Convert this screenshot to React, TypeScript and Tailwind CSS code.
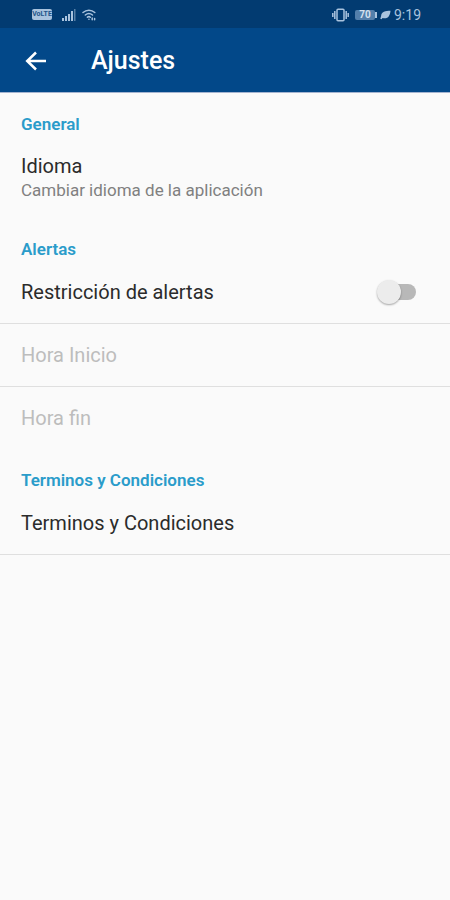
import React, { useState } from "react";
import clsx from "clsx";

const StatusBar = () => {
  return (
    <div className="flex h-7 items-center justify-between bg-[#023b71] pt-px pr-[29px] pl-8 text-[#a9c3de]">
      <div className="flex items-center">
        <span className="flex h-[11px] w-5 items-center justify-center rounded-xs bg-[#a9c3de] text-[7px] font-bold text-[#23558a]">
          VoLTE
        </span>
        <svg className="ml-[10px]" width="14" height="12" viewBox="0 0 14 12" fill="currentColor">
          <rect x="0" y="9" width="2" height="3" />
          <rect x="3" y="7" width="2" height="5" />
          <rect x="6" y="5" width="2" height="7" />
          <rect x="9" y="2" width="2" height="10" />
          <rect x="12" y="0" width="1.5" height="12" opacity="0.5" />
        </svg>
        <svg
          className="ml-[6px]"
          width="14"
          height="12"
          viewBox="0 0 14 12"
          fill="none"
          stroke="currentColor"
          strokeWidth="1.5"
          strokeLinecap="round"
        >
          <path d="M1 3.5C4.4 0.4 9.4 0.4 12.8 3.5" />
          <path d="M3.3 6C5.4 4.2 8.4 4.2 10.5 6" />
          <path d="M5.4 8.2C6.3 7.5 7.5 7.5 8.3 8.2" />
          <path d="M6.9 10.3h.1M10.2 9v1.8M12.6 9.4v1.4" />
        </svg>
      </div>

      <div className="flex items-center">
        <svg
          width="17"
          height="14"
          viewBox="0 0 17 14"
          fill="none"
          stroke="currentColor"
          strokeWidth="1.5"
        >
          <rect x="5" y="1.2" width="7" height="11.6" rx="1" />
          <path d="M2.8 3v8M14.2 3v8M0.8 5v4M16.2 5v4" />
        </svg>
        <span className="ml-[6px] flex h-[10px] w-5 items-center justify-center rounded-xs bg-[#537fab] text-[10px] font-bold text-[#d3e1ee]">
          70
        </span>
        <span className="h-[6px] w-[2px] bg-[#a9c3de]" />
        <svg className="ml-[3px]" width="11" height="10" viewBox="0 0 12 10" fill="currentColor">
          <path d="M11.5 0.3C6 0.3 1.2 1.6 1.2 6.1L0.3 9.2l1.4 0.3L2.8 8.3C8.4 9.8 11 6 11.5 0.3Z" />
        </svg>
        <span className="ml-[3px] text-[14px] leading-6">9:19</span>
      </div>
    </div>
  );
};

const SectionTitle = ({ children }: { children: React.ReactNode }) => {
  return (
    <h2 className="px-[21px] pt-[19px] text-[17px] leading-6 font-semibold text-[#2a9cca]">
      {children}
    </h2>
  );
};

type RowProps = {
  title: string;
  summary?: string;
  disabled?: boolean;
  divider?: boolean;
};

const Row = ({ title, summary, disabled, divider }: RowProps) => {
  return (
    <button
      type="button"
      disabled={disabled}
      className={clsx(
        "block w-full px-[21px] text-left",
        summary ? "pt-[18px] pb-4" : "py-[19px]",
        divider && "border-b border-[#dfdfdf]",
      )}
    >
      <span
        className={clsx(
          "block text-[20px] leading-6",
          disabled ? "text-[#bdbdbd]" : "text-[#2b2b2b]",
        )}
      >
        {title}
      </span>
      {summary && (
        <span className="block text-[17px] leading-6 text-[#808080]">{summary}</span>
      )}
    </button>
  );
};

const App = () => {
  const [restricted, setRestricted] = useState(false);

  return (
    <div className="min-h-screen bg-[#fafafa] font-['Roboto',sans-serif]">
      <StatusBar />
      <header className="flex h-[65px] items-center border-b border-[#a5b4d0] bg-[#024889] pt-[2px] pl-[25px] text-white">
        <button type="button" aria-label="Volver">
          <svg
            width="22"
            height="20"
            viewBox="0 0 22 20"
            fill="none"
            stroke="currentColor"
            strokeWidth="2.5"
          >
            <path d="M21 10H2.5M11 1.5L2.2 10l8.8 8.5" />
          </svg>
        </button>
        <h1 className="ml-11 text-[25px] leading-8 font-medium">Ajustes</h1>
      </header>

      <main>
        <section>
          <SectionTitle>General</SectionTitle>
          <Row title="Idioma" summary="Cambiar idioma de la aplicación" />
        </section>

        <section>
          <SectionTitle>Alertas</SectionTitle>
          <label className="flex items-center justify-between border-b border-[#dfdfdf] py-[19px] pr-[34px] pl-[21px]">
            <span className="text-[20px] leading-6 text-[#2b2b2b]">Restricción de alertas</span>
            <span className="relative flex h-6 w-[39px] items-center justify-end">
              <input
                type="checkbox"
                role="switch"
                className="peer sr-only"
                checked={restricted}
                onChange={(e) => setRestricted(e.target.checked)}
              />
              <span className="h-4 w-[34px] rounded-full bg-[#b8b8b8] peer-checked:bg-[#8fc9e2]" />
              <span className="absolute top-0 left-0 size-6 rounded-full bg-[#ececec] shadow-[0_1px_2px_rgba(0,0,0,0.35)] peer-checked:left-4 peer-checked:bg-[#2a9cca]" />
            </span>
          </label>
          <Row title="Hora Inicio" disabled={!restricted} divider />
          <Row title="Hora fin" disabled={!restricted} />
        </section>

        <section>
          <SectionTitle>Terminos y Condiciones</SectionTitle>
          <Row title="Terminos y Condiciones" divider />
        </section>
      </main>
    </div>
  );
};

export default App;
